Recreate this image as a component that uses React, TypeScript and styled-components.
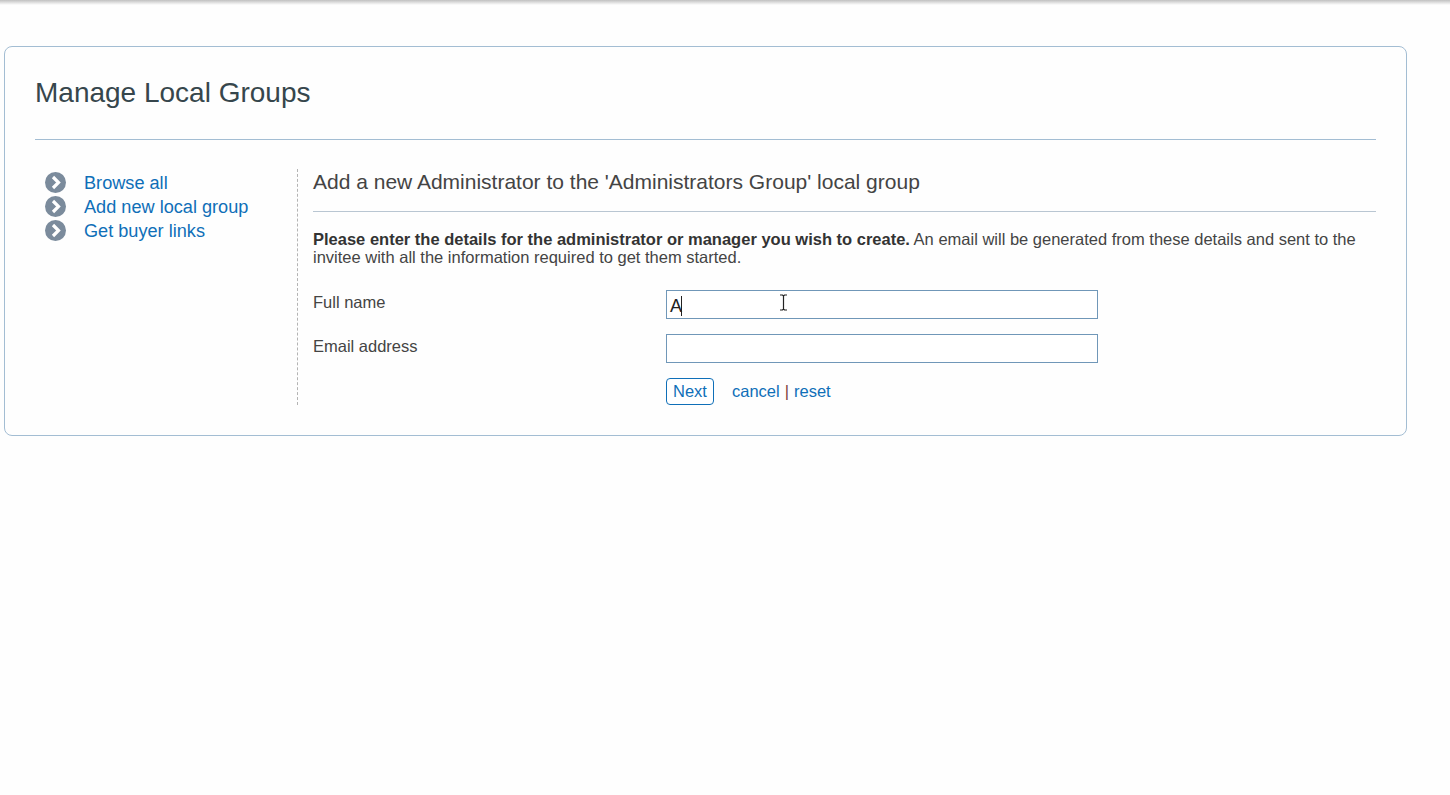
import styled, { createGlobalStyle } from "styled-components";

const GlobalStyle = createGlobalStyle`
  html, body {
    margin: 0;
    padding: 0;
    background: #fefefe;
  }
  body {
    font-family: "Liberation Sans", Arial, sans-serif;
    color: #444;
  }
`;

const TopShadow = styled.div`
  height: 5px;
  background: linear-gradient(#c0c0c0, #e6e6e6 60%, #fefefe);
`;

const Panel = styled.section`
  box-sizing: border-box;
  width: 1403px;
  height: 390px;
  margin: 41px 0 0 4px;
  padding: 0 30px;
  border: 1px solid #a3bdd3;
  border-radius: 8px;
`;

const PageTitle = styled.h1`
  height: 92px;
  margin: 0;
  border-bottom: 1px solid #a3bdd3;
  font-size: 28px;
  font-weight: 400;
  line-height: 91px;
  color: #36464c;
`;

const Columns = styled.div`
  display: flex;
  margin-top: 29px;
`;

const Sidebar = styled.ul`
  box-sizing: border-box;
  width: 263px;
  height: 236px;
  margin: 0;
  padding: 2px 0 0 10px;
  border-right: 1px dashed #b4b4b4;
  list-style: none;
`;

const SideItem = styled.li`
  display: flex;
  align-items: center;
  height: 24px;
  gap: 18px;
`;

const Bullet = styled.svg`
  width: 21px;
  height: 21px;
  flex: none;
  margin-top: -2px;
`;

const Link = styled.a<{ $size?: number }>`
  color: #0f6fb8;
  text-decoration: none;
  font-size: ${(p) => p.$size ?? 16.5}px;
  cursor: pointer;
`;

const Main = styled.div`
  flex: 1;
  padding-left: 15px;
`;

const SubTitle = styled.h2`
  height: 42px;
  margin: 0;
  border-bottom: 1px solid #b9c6d2;
  font-size: 21px;
  font-weight: 400;
  line-height: 26px;
  color: #444;
`;

const Intro = styled.p`
  margin: 18px 0 0;
  font-size: 16.5px;
  line-height: 18px;
  color: #444;

  strong {
    color: #333;
  }
`;

const FormGrid = styled.div`
  display: grid;
  grid-template-columns: 353px 432px;
  grid-auto-rows: 29px;
  row-gap: 15px;
  margin-top: 24px;
`;

const FieldLabel = styled.label`
  font-size: 16.5px;
  line-height: 25px;
  color: #444;
`;

const InputBox = styled.div`
  position: relative;
  box-sizing: border-box;
  height: 29px;
  padding-left: 3px;
  border: 1px solid #7097b8;
  background: #fff;
  font-size: 18px;
  line-height: 30px;
  color: #222;
`;

const Caret = styled.span`
  position: absolute;
  top: 5px;
  left: 14px;
  width: 1px;
  height: 20px;
  background: #222;
`;

const IBeam = styled.svg`
  position: absolute;
  top: 3px;
  left: 112px;
  width: 9px;
  height: 17px;
`;

const Actions = styled.div`
  display: flex;
  align-items: center;
  grid-column: 2;
  height: 27px;
  font-size: 16.5px;
  color: #7a3b3b;
`;

const NextButton = styled.button`
  box-sizing: border-box;
  width: 48px;
  height: 27px;
  margin-right: 18px;
  padding: 0;
  border: 1px solid #0f6fb8;
  border-radius: 4px;
  background: #fff;
  color: #0f6fb8;
  font-family: inherit;
  font-size: 16.5px;
`;

const Separator = styled.span`
  margin: 0 5px;
`;

const sideLinks = ["Browse all", "Add new local group", "Get buyer links"];

export default function App() {
  return (
    <>
      <GlobalStyle />
      <TopShadow />
      <Panel>
        <PageTitle>Manage Local Groups</PageTitle>
        <Columns>
          <Sidebar>
            {sideLinks.map((label) => (
              <SideItem key={label}>
                <Bullet viewBox="0 0 21 21">
                  <circle cx="10.5" cy="10.5" r="10.5" fill="#7b8b9c" />
                  <path d="M8 5 L13.5 10.5 L8 16" fill="none" stroke="#fff" strokeWidth="3.2" />
                </Bullet>
                <Link $size={18.15}>{label}</Link>
              </SideItem>
            ))}
          </Sidebar>
          <Main>
            <SubTitle>Add a new Administrator to the 'Administrators Group' local group</SubTitle>
            <Intro>
              <strong>Please enter the details for the administrator or manager you wish to create.</strong> An email
              will be generated from these details and sent to the invitee with all the information required to get
              them started.
            </Intro>
            <FormGrid>
              <FieldLabel>Full name</FieldLabel>
              <InputBox>
                A
                <Caret />
                <IBeam viewBox="0 0 9 17">
                  <path d="M1 1 H3.5 L4.5 2 L5.5 1 H8 M4.5 2 V15 M1 16 H3.5 L4.5 15 L5.5 16 H8" fill="none" stroke="#222" strokeWidth="1.2" />
                </IBeam>
              </InputBox>
              <FieldLabel>Email address</FieldLabel>
              <InputBox />
              <Actions>
                <NextButton>Next</NextButton>
                <Link>cancel</Link>
                <Separator>|</Separator>
                <Link>reset</Link>
              </Actions>
            </FormGrid>
          </Main>
        </Columns>
      </Panel>
    </>
  );
}
